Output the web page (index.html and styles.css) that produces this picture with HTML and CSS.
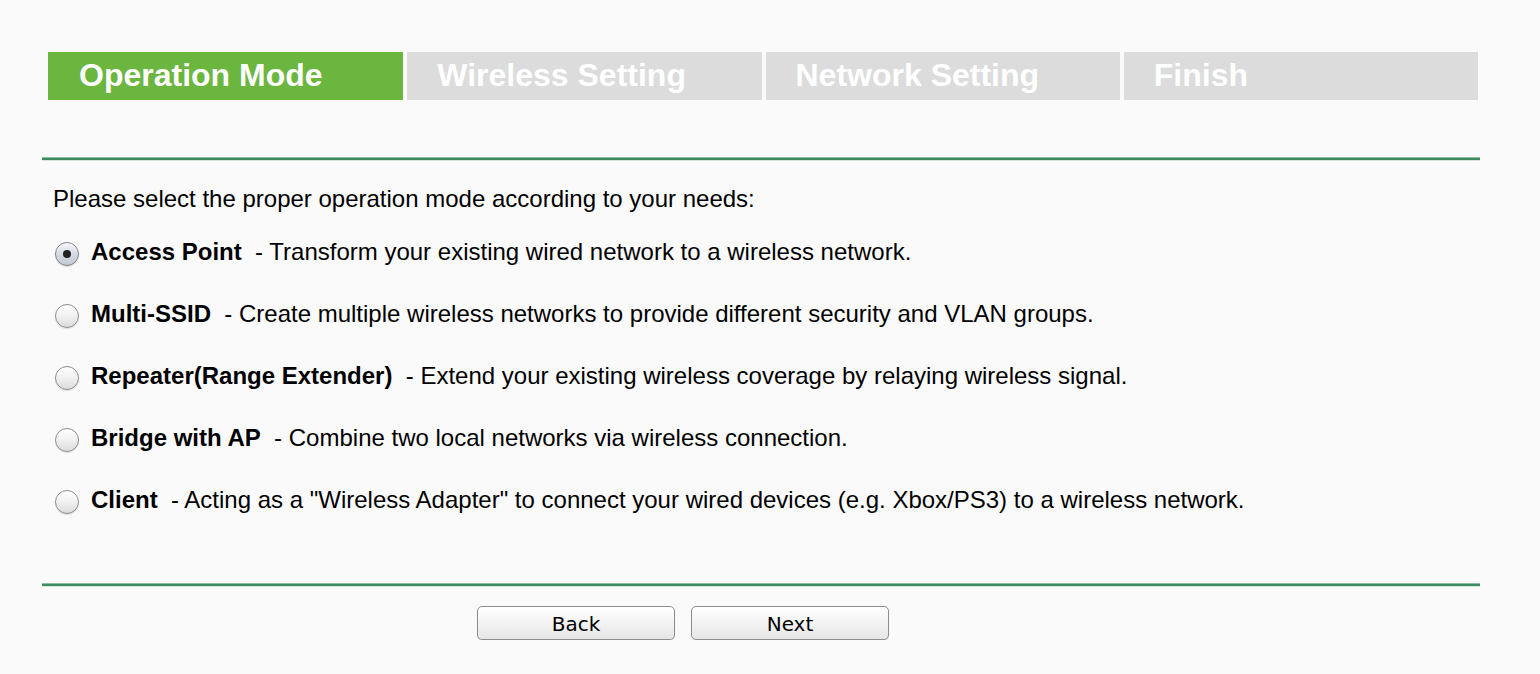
FILE: index.html
```html
<!DOCTYPE html>
<html>
<head>
<meta charset="utf-8">
<link rel="stylesheet" href="styles.css">
</head>
<body>
<div class="wrap">
  <div class="tabs">
    <div class="tab active">Operation Mode</div>
    <div class="tab">Wireless Setting</div>
    <div class="tab">Network Setting</div>
    <div class="tab">Finish</div>
  </div>
  <div class="rule"></div>
  <div class="content">
    <p class="intro">Please select the proper operation mode according to your needs:</p>
    <label class="row"><span class="radio checked"></span><b>Access Point</b>&nbsp; - Transform your existing wired network to a wireless network.</label>
    <label class="row"><span class="radio"></span><b>Multi-SSID</b>&nbsp; - Create multiple wireless networks to provide different security and VLAN groups.</label>
    <label class="row"><span class="radio"></span><b>Repeater(Range Extender)</b>&nbsp; - Extend your existing wireless coverage by relaying wireless signal.</label>
    <label class="row"><span class="radio"></span><b>Bridge with AP</b>&nbsp; - Combine two local networks via wireless connection.</label>
    <label class="row"><span class="radio"></span><b>Client</b>&nbsp; - Acting as a "Wireless Adapter" to connect your wired devices (e.g. Xbox/PS3) to a wireless network.</label>
  </div>
  <div class="rule rule2"></div>
  <div class="buttons">
    <button class="btn">Back</button>
    <button class="btn">Next</button>
  </div>
</div>
</body>
</html>
```
FILE: styles.css
```css
html, body {
  margin: 0;
  padding: 0;
  background: #fafafa;
  font-family: "Liberation Sans", Arial, sans-serif;
  color: #000;
}
.wrap {
  padding-left: 42px;
  width: 1438px;
  padding-top: 52px;
}
.tabs {
  display: flex;
  gap: 4px;
  margin-left: 6px;
  width: 1430px;
}
.tab {
  flex: 1;
  height: 48px;
  line-height: 46px;
  padding-left: 30px;
  background: #dcdcdc;
  color: #fff;
  font-weight: bold;
  font-size: 32px;
}
.tab.active {
  background: #6ab63f;
  padding-left: 31px;
}
.rule {
  margin-top: 57px;
  height: 2px;
  background: #3f8a5f;
  border-top: 1px solid #8cbf9f;
  border-bottom: 1px solid #d4e6da;
}
.content {
  padding: 24px 0 0 11px;
}
.intro {
  margin: 0;
  font-size: 24px;
  line-height: 28px;
}
.row {
  display: flex;
  align-items: center;
  height: 62px;
  font-size: 24px;
}
.intro + .row {
  margin-top: 8px;
}
.row b {
  font-weight: bold;
}
.radio {
  width: 24px;
  height: 24px;
  box-sizing: border-box;
  border-radius: 50%;
  border: 1px solid #8c8c8c;
  background: linear-gradient(#ffffff, #f2f2f2 45%, #dcdcdc);
  box-shadow: inset 0 1px 1px rgba(255,255,255,0.9), 0 1px 1px rgba(0,0,0,0.12);
  margin: 0 12px 0 2px;
  display: flex;
  align-items: center;
  justify-content: center;
  flex-shrink: 0;
  position: relative;
  top: 2px;
}
.radio.checked {
  background: linear-gradient(#f4f6f9, #d6dbe2 50%, #c3c9d2);
  border-color: #7d8188;
}
.radio.checked::after {
  content: "";
  width: 8px;
  height: 8px;
  border-radius: 50%;
  background: #222;
}
.rule2 {
  margin-top: 52px;
}
.buttons {
  display: flex;
  gap: 16px;
  margin-top: 19px;
  padding-left: 435px;
}
.btn {
  width: 198px;
  height: 34px;
  border: 1px solid #8e8e8e;
  border-radius: 5px;
  background: linear-gradient(#ffffff, #f3f3f3 50%, #e6e6e6);
  font-family: "DejaVu Sans", sans-serif;
  font-size: 20px;
  color: #000;
  box-shadow: 0 1px 1px rgba(0,0,0,0.12);
  padding: 2px 0 0;
}
```
